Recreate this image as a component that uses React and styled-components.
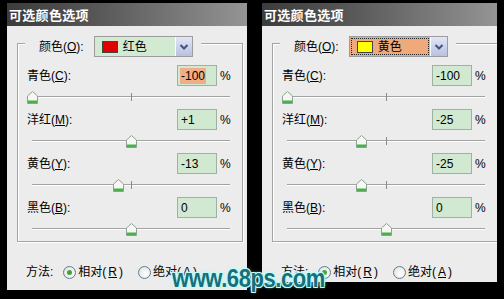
import React from "react";
import styled, { createGlobalStyle } from "styled-components";

const GlobalStyle = createGlobalStyle`
  html, body {
    margin: 0;
    background: #000;
  }
  body {
    font-family: "Liberation Sans", "Noto Sans CJK SC", sans-serif;
    font-size: 12px;
    color: #000;
  }
`;

const Screen = styled.div`
  position: relative;
  width: 504px;
  height: 299px;
  overflow: hidden;
  background: #000;
  display: flex;
  align-items: flex-start;
  gap: 15px;
  padding: 3px 0 0 7px;
  box-sizing: border-box;
`;

const Panel = styled.div`
  width: ${(p) => p.$width}px;
  height: ${(p) => p.$height}px;
  flex-shrink: 0;
  background: #ececec;
  display: flex;
  flex-direction: column;
  overflow: hidden;
`;

const TitleBar = styled.div`
  height: 23px;
  flex-shrink: 0;
  display: flex;
  align-items: center;
  padding-left: 2px;
  background: linear-gradient(to right, #3c3c3c, #555 35%, #949494);
  color: #fff;
  font-family: "Noto Sans CJK SC", sans-serif;
  font-weight: 700;
  font-size: 13px;
  letter-spacing: 0.3px;
`;

const Body = styled.div`
  padding: 0 4px 0 10px;
  display: flex;
  flex-direction: column;
`;

const GroupBox = styled.div`
  width: 226px;
  flex-shrink: 0;
  margin-top: 17px;
  box-sizing: border-box;
  border: 1px solid #a4a4a4;
  box-shadow: inset 1px 1px 0 #fff, 1px 1px 0 #fff;
  display: flex;
  flex-direction: column;
`;

const Legend = styled.div`
  align-self: flex-start;
  margin: -8px 0 0 7px;
  padding: 0 8px 0 14px;
  background: #ececec;
  display: flex;
  align-items: center;
  gap: 10px;
  height: 21px;
`;

const Label = styled.span`
  white-space: nowrap;
  line-height: 14px;
  flex: ${(p) => (p.$grow ? 1 : "none")};
`;

const Key = styled.span`
  text-decoration: underline;
`;

const Combo = styled.div`
  width: 99px;
  height: 21px;
  box-sizing: border-box;
  border: 1px solid #9c9c9c;
  display: flex;
  background: ${(p) => (p.$focus ? "#f0a97a" : "#d2ead2")};
`;

const ComboValue = styled.div`
  flex: 1;
  margin: 1px;
  padding-left: 5px;
  display: flex;
  align-items: center;
  gap: 5px;
  line-height: 14px;
  border: 1px dotted ${(p) => (p.$focus ? "#222" : "transparent")};
`;

const Swatch = styled.span`
  width: 16px;
  height: 12px;
  box-sizing: border-box;
  border: 1px solid #444;
  background: ${(p) => p.$color};
`;

const ArrowButton = styled.div`
  width: 16px;
  display: flex;
  align-items: center;
  justify-content: center;
  background: linear-gradient(#e2e6f5, #b8c1e0);
  border-left: 1px solid #fff;
`;

const Rows = styled.div`
  margin-top: 8px;
  display: flex;
  flex-direction: column;
`;

const Channel = styled.div`
  display: flex;
  flex-direction: column;
`;

const Row = styled.div`
  height: 21px;
  display: flex;
  align-items: center;
  padding-left: 9px;
`;

const ValueBox = styled.div`
  width: 40px;
  height: 21px;
  box-sizing: border-box;
  border: 1px solid #9db2a5;
  background: #d0e9d0;
  display: flex;
  align-items: center;
  padding-left: 2px;
  line-height: 14px;
`;

const ValueText = styled.span`
  padding: 1px 1px;
  background: ${(p) => (p.$selected ? "#efae86" : "transparent")};
`;

const Percent = styled.span`
  width: 25px;
  box-sizing: border-box;
  padding-left: 3px;
`;

const SliderArea = styled.div`
  position: relative;
  height: 23px;
  box-sizing: border-box;
  padding-top: 10px;
  margin: 0 12px 0 14px;
`;

const Track = styled.div`
  height: 1px;
  background: #a2a2a2;
  border-bottom: 1px solid #fff;
`;

const Tick = styled.div`
  position: absolute;
  left: 50%;
  top: 7px;
  width: 1px;
  height: 8px;
  background: #8a8a8a;
`;

const Thumb = styled.svg`
  position: absolute;
  top: 5px;
`;

const MethodRow = styled.div`
  margin-top: 22px;
  height: 16px;
  padding-left: 9px;
  display: flex;
  align-items: center;
`;

const RadioItem = styled.span`
  display: flex;
  align-items: center;
  gap: 2px;
  line-height: 14px;
  margin-left: ${(p) => p.$gap}px;
`;

const RadioCircle = styled.span`
  width: 13px;
  height: 13px;
  box-sizing: border-box;
  border-radius: 50%;
  border: 1px solid #5d7c99;
  background: radial-gradient(circle at 60% 60%, #fff, #dcdcd6);
  display: flex;
  align-items: center;
  justify-content: center;
  &::after {
    content: "";
    width: 5px;
    height: 5px;
    border-radius: 50%;
    background: ${(p) => (p.$checked ? "#3da53d" : "transparent")};
  }
`;

const Watermark = styled.div`
  position: absolute;
  left: 172px;
  top: 266px;
  font-family: "Liberation Sans", sans-serif;
  font-weight: 700;
  font-size: 25px;
  line-height: 25px;
  letter-spacing: -0.5px;
  color: #16707a;
  transform: scaleX(0.88);
  transform-origin: left top;
  text-shadow: 1px 1px 0 #c8fafa, -1px -1px 0 #c8fafa, 1px -1px 0 #c8fafa,
    -1px 1px 0 #c8fafa, 0 0 4px #9ff;
  white-space: nowrap;
`;

const channels = [
  { name: "青色", key: "C" },
  { name: "洋红", key: "M" },
  { name: "黄色", key: "Y" },
  { name: "黑色", key: "B" },
];

const ThumbIcon = ({ value }) => {
  const left = ((value + 100) / 200) * 198 - 5.5;
  return (
    <Thumb width="11" height="13" viewBox="0 0 11 13" style={{ left }}>
      <path d="M0.5 5 L5.5 0.5 L10.5 5 V12.5 H0.5 Z" fill="#f7f7f3" stroke="#8aa394" />
      <rect x="1" y="9.5" width="9" height="2.5" fill="#49b04a" />
    </Thumb>
  );
};

const Dialog = ({ width, height, colorName, swatch, focus, values, selectedFirst }) => (
  <Panel $width={width} $height={height}>
    <TitleBar>可选颜色选项</TitleBar>
    <Body>
      <GroupBox>
        <Legend>
          <Label>
            颜色(<Key>O</Key>):
          </Label>
          <Combo $focus={focus}>
            <ComboValue $focus={focus}>
              <Swatch $color={swatch} />
              {colorName}
            </ComboValue>
            <ArrowButton>
              <svg width="10" height="8" viewBox="0 0 10 8">
                <polyline points="1.5,2 5,5.5 8.5,2" fill="none" stroke="#3f5480" strokeWidth="2" />
              </svg>
            </ArrowButton>
          </Combo>
        </Legend>
        <Rows>
          {channels.map((c, i) => (
            <Channel key={c.key}>
              <Row>
                <Label $grow>
                  {c.name}(<Key>{c.key}</Key>):
                </Label>
                <ValueBox>
                  <ValueText $selected={selectedFirst && i === 0}>
                    {values[i] > 0 ? `+${values[i]}` : values[i]}
                  </ValueText>
                </ValueBox>
                <Percent>%</Percent>
              </Row>
              <SliderArea>
                <Track />
                <Tick />
                <ThumbIcon value={values[i]} />
              </SliderArea>
            </Channel>
          ))}
        </Rows>
      </GroupBox>
      <MethodRow>
        <Label>方法:</Label>
        <RadioItem $gap={10}>
          <RadioCircle $checked />
          相对(<Key>R</Key>)
        </RadioItem>
        <RadioItem $gap={15}>
          <RadioCircle />
          绝对(<Key>A</Key>)
        </RadioItem>
      </MethodRow>
    </Body>
  </Panel>
);

export default function App() {
  return (
    <>
      <GlobalStyle />
      <Screen>
        <Dialog
          width={240}
          height={287}
          colorName="红色"
          swatch="#e00000"
          values={[-100, 1, -13, 0]}
          selectedFirst
        />
        <Dialog
          width={235}
          height={279}
          colorName="黄色"
          swatch="#ffff00"
          focus
          values={[-100, -25, -25, 0]}
        />
        <Watermark>www.68ps.com</Watermark>
      </Screen>
    </>
  );
}
